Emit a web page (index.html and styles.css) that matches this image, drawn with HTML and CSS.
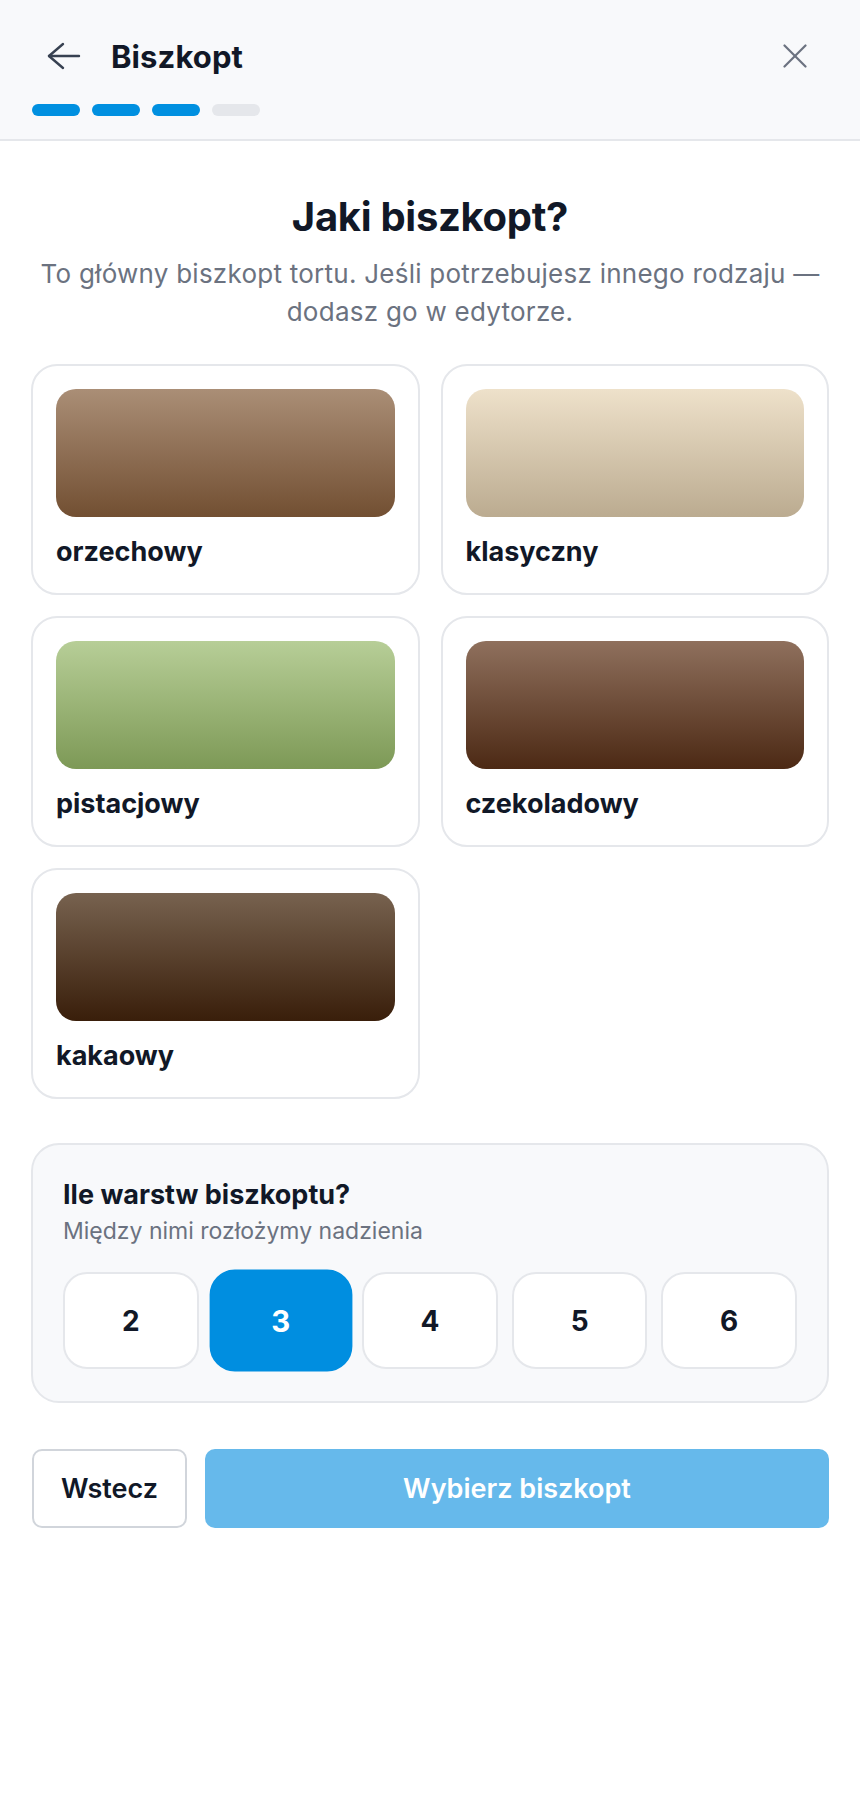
FILE: index.html
```html
<!DOCTYPE html>
<html lang="pl">
<head>
    <meta charset="UTF-8">
    <meta name="viewport" content="width=device-width, initial-scale=1.0">
    <title>Biszkopt</title>
    <link rel="stylesheet" href="styles.css">
</head>
<body>
    <header class="topbar">
        <div class="topbar-row">
            <button class="icon-btn back-btn" aria-label="Wstecz">
                <svg width="34" height="28" viewBox="0 0 34 28" fill="none" stroke="currentColor" stroke-width="2.4" stroke-linecap="round" stroke-linejoin="round">
                    <path d="M16 2 L2 14 L16 26"/>
                    <path d="M2 14 H32"/>
                </svg>
            </button>
            <h2 class="topbar-title">Biszkopt</h2>
            <button class="icon-btn close-btn" aria-label="Zamknij">
                <svg width="24" height="24" viewBox="0 0 24 24" fill="none" stroke="currentColor" stroke-width="2.2" stroke-linecap="round">
                    <path d="M1.5 1.5 L22.5 22.5"/>
                    <path d="M22.5 1.5 L1.5 22.5"/>
                </svg>
            </button>
        </div>
        <div class="steps">
            <span class="step done"></span>
            <span class="step done"></span>
            <span class="step done"></span>
            <span class="step"></span>
        </div>
    </header>

    <main class="content">
        <h1 class="question">Jaki biszkopt?</h1>
        <p class="lead">To główny biszkopt tortu. Jeśli potrzebujesz innego rodzaju — dodasz go w edytorze.</p>

        <div class="options">
            <button class="option">
                <span class="swatch swatch-orzechowy"></span>
                <span class="option-name">orzechowy</span>
            </button>
            <button class="option">
                <span class="swatch swatch-klasyczny"></span>
                <span class="option-name">klasyczny</span>
            </button>
            <button class="option">
                <span class="swatch swatch-pistacjowy"></span>
                <span class="option-name">pistacjowy</span>
            </button>
            <button class="option">
                <span class="swatch swatch-czekoladowy"></span>
                <span class="option-name">czekoladowy</span>
            </button>
            <button class="option">
                <span class="swatch swatch-kakaowy"></span>
                <span class="option-name">kakaowy</span>
            </button>
        </div>

        <section class="layers">
            <h3 class="layers-title">Ile warstw biszkoptu?</h3>
            <p class="layers-hint">Między nimi rozłożymy nadzienia</p>
            <div class="layer-picker">
                <button class="layer">2</button>
                <button class="layer active">3</button>
                <button class="layer">4</button>
                <button class="layer">5</button>
                <button class="layer">6</button>
            </div>
        </section>

        <div class="actions">
            <button class="btn btn-secondary">Wstecz</button>
            <button class="btn btn-primary" disabled>Wybierz biszkopt</button>
        </div>
    </main>
</body>
</html>
```

FILE: styles.css
```css
* {
    box-sizing: border-box;
}

body {
    margin: 0;
    background: #ffffff;
    font-family: Inter, "Noto Sans", sans-serif;
    color: #111827;
}

button {
    font-family: inherit;
    cursor: pointer;
}

/* top bar */

.topbar {
    background: #f8f9fb;
    border-bottom: 2px solid #e5e7eb;
    padding: 32px 32px 23px;
}

.topbar-row {
    display: flex;
    align-items: center;
    height: 48px;
}

.icon-btn {
    background: none;
    border: 0;
    padding: 0;
    display: flex;
    align-items: center;
    justify-content: center;
}

.back-btn {
    color: #374151;
    margin-left: 15px;
}

.close-btn {
    color: #6b7280;
    margin-left: auto;
    margin-right: 21px;
}

.topbar-title {
    margin: 0 0 0 30px;
    font-size: 31px;
    font-weight: 700;
    letter-spacing: 0.1px;
}

.steps {
    display: flex;
    gap: 12px;
    margin-top: 24px;
}

.step {
    width: 48px;
    height: 12px;
    border-radius: 6px;
    background: #e5e7eb;
}

.step.done {
    background: #0090e0;
}

/* content */

.content {
    padding: 52px 31px 60px;
}

.question {
    margin: 0;
    text-align: center;
    font-size: 40px;
    line-height: 48px;
    font-weight: 700;
    letter-spacing: -0.3px;
}

.lead {
    margin: 14px 0 0;
    text-align: center;
    font-size: 26px;
    line-height: 38px;
    letter-spacing: 0.25px;
    color: #6b7280;
}

.options {
    display: grid;
    grid-template-columns: 1fr 1fr;
    gap: 21px;
    margin-top: 33px;
}

.option {
    display: flex;
    flex-direction: column;
    gap: 17px;
    padding: 23px 23px 24px;
    background: #ffffff;
    border: 2px solid #e5e7eb;
    border-radius: 26px;
    text-align: left;
}

.swatch {
    display: block;
    height: 128px;
    border-radius: 20px;
}

.swatch-orzechowy {
    background: linear-gradient(#aa8e76, #724f32);
}

.swatch-klasyczny {
    background: linear-gradient(#eee1ca, #bbab90);
}

.swatch-pistacjowy {
    background: linear-gradient(#b7ce97, #7d9956);
}

.swatch-czekoladowy {
    background: linear-gradient(#8f705d, #4c2914);
}

.swatch-kakaowy {
    background: linear-gradient(#77624f, #391e0a);
}

.option-name {
    font-size: 27px;
    line-height: 35px;
    font-weight: 700;
    color: #111827;
}

/* layers */

.layers {
    margin-top: 44px;
    background: #f8f9fb;
    border: 2px solid #e5e7eb;
    border-radius: 28px;
    padding: 33px 30px 32px;
}

.layers-title {
    margin: 0;
    font-size: 27px;
    line-height: 34px;
    font-weight: 700;
}

.layers-hint {
    margin: 4px 0 0;
    font-size: 23px;
    line-height: 31px;
    color: #6b7280;
}

.layer-picker {
    display: grid;
    grid-template-columns: repeat(5, 1fr);
    gap: 14px;
    margin-top: 25px;
}

.layer {
    height: 97px;
    background: #ffffff;
    border: 2px solid #e5e7eb;
    border-radius: 24px;
    font-size: 28px;
    font-weight: 700;
    color: #111827;
}

.layer.active {
    background: #008ee0;
    border-color: #008ee0;
    color: #ffffff;
    transform: scale(1.05);
}

/* footer actions */

.actions {
    display: flex;
    gap: 18px;
    margin-top: 46px;
}

.btn {
    height: 79px;
    border-radius: 10px;
    font-size: 27px;
    font-weight: 600;
}

.btn-secondary {
    width: 155px;
    margin-left: 1px;
    background: #ffffff;
    border: 2px solid #d1d5db;
    color: #111827;
}

.btn-primary {
    flex: 1;
    background: #66b9eb;
    border: 0;
    color: #ffffff;
    cursor: default;
}
```
